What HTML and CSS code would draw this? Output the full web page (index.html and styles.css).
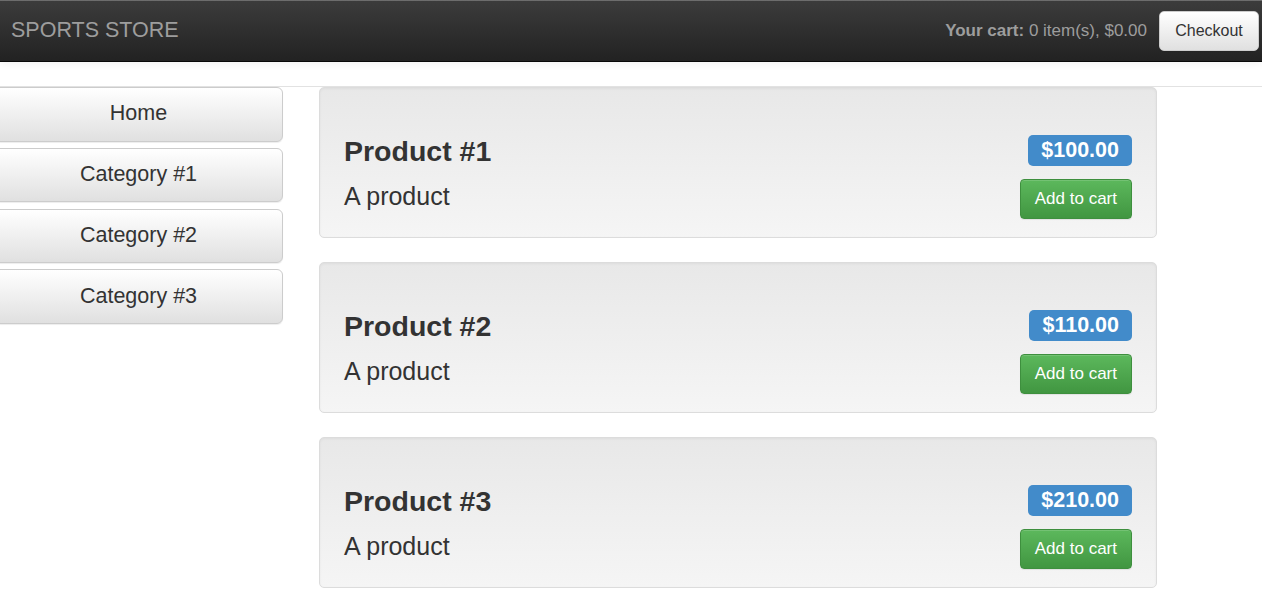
FILE: index.html
```html
<!DOCTYPE html>
<html>
<head>
<meta charset="utf-8">
<title>Sports Store</title>
<link rel="stylesheet" href="styles.css">
</head>
<body>
<header class="navbar">
  <span class="brand">SPORTS STORE</span>
  <div class="cart">
    <span class="cart-summary"><b>Your cart:</b> 0 item(s), $0.00</span>
    <button class="btn btn-default">Checkout</button>
  </div>
</header>
<div class="spacer"></div>
<main class="layout">
  <nav class="sidebar">
    <button class="btn btn-nav">Home</button>
    <button class="btn btn-nav">Category #1</button>
    <button class="btn btn-nav">Category #2</button>
    <button class="btn btn-nav">Category #3</button>
  </nav>
  <section class="products">
    <div class="well">
      <div class="well-top">
        <h3 class="name">Product #1</h3>
        <span class="price">$100.00</span>
      </div>
      <div class="well-bottom">
        <span class="desc">A product</span>
        <button class="btn btn-success">Add to cart</button>
      </div>
    </div>
    <div class="well">
      <div class="well-top">
        <h3 class="name">Product #2</h3>
        <span class="price">$110.00</span>
      </div>
      <div class="well-bottom">
        <span class="desc">A product</span>
        <button class="btn btn-success">Add to cart</button>
      </div>
    </div>
    <div class="well">
      <div class="well-top">
        <h3 class="name">Product #3</h3>
        <span class="price">$210.00</span>
      </div>
      <div class="well-bottom">
        <span class="desc">A product</span>
        <button class="btn btn-success">Add to cart</button>
      </div>
    </div>
  </section>
</main>
</body>
</html>
```

FILE: styles.css
```css
* { box-sizing: border-box; }
html, body { margin: 0; padding: 0; }
body {
  font-family: "Liberation Sans", Arial, sans-serif;
  color: #333;
  background: #fff;
  overflow: hidden;
}

.navbar {
  height: 62px;
  display: flex;
  align-items: center;
  justify-content: space-between;
  background: linear-gradient(to bottom, #3c3c3c 0%, #222 100%);
  border-bottom: 1px solid #080808;
  box-shadow: inset 0 1px 0 rgba(255,255,255,.25), 0 2px 8px rgba(0,0,0,.06);
  padding: 0 3px 0 11px;
}
.brand {
  font-size: 21.5px;
  color: #9d9d9d;
}
.cart {
  display: flex;
  align-items: center;
  gap: 12px;
}
.cart-summary {
  font-size: 17px;
  color: #9d9d9d;
}
.btn {
  font-family: inherit;
  cursor: pointer;
  margin: 0;
}
.btn-default {
  height: 40px;
  width: 100px;
  font-size: 16px;
  color: #333;
  padding: 0;
  border: 1px solid #ccc;
  border-radius: 5px;
  background: linear-gradient(to bottom, #fff 0%, #e0e0e0 100%);
  box-shadow: inset 0 1px 0 rgba(255,255,255,.15), 0 1px 1px rgba(0,0,0,.075);
}

.spacer {
  height: 25px;
  border-bottom: 1px solid #e2e2e2;
}

.layout {
  display: flex;
  align-items: flex-start;
}
.sidebar {
  width: 289px;
  margin-left: -6px;
  display: flex;
  flex-direction: column;
  gap: 6.25px;
}
.btn-nav {
  height: 54.5px;
  width: 100%;
  font-size: 21.5px;
  color: #333;
  padding-top: 0;
  padding-bottom: 1px;
  border: 1px solid #ccc;
  border-radius: 6px;
  background: linear-gradient(to bottom, #fff 0%, #e0e0e0 100%);
  box-shadow: inset 0 1px 0 rgba(255,255,255,.15), 0 1px 1px rgba(0,0,0,.075);
}

.products {
  margin-left: 36px;
  width: 838px;
  display: flex;
  flex-direction: column;
  gap: 24px;
}
.well {
  height: 151px;
  border: 1px solid #dcdcdc;
  border-radius: 5px;
  background: linear-gradient(to bottom, #e8e8e8 0%, #f5f5f5 100%);
  box-shadow: inset 0 1px 3px rgba(0,0,0,.05), 0 1px 0 rgba(255,255,255,.1);
  padding: 47px 24px 18px 24px;
}
.well-top {
  display: flex;
  justify-content: space-between;
  align-items: flex-start;
  height: 31px;
}
.name {
  margin: 1px 0 0 0;
  font-size: 28.5px;
  line-height: 31px;
  font-weight: bold;
  color: #333;
}
.price {
  height: 31px;
  line-height: 29px;
  padding: 1px 13px 1px 13px;
  font-size: 21.5px;
  font-weight: bold;
  color: #fff;
  background: #428bca;
  border-radius: 5px;
}
.well-bottom {
  margin-top: 13px;
  display: flex;
  justify-content: space-between;
  align-items: flex-start;
}
.desc {
  margin-top: 2px;
  font-size: 25px;
  line-height: 30px;
}
.btn-success {
  height: 40px;
  padding: 0 14px;
  font-size: 17px;
  color: #fff;
  border: 1px solid #3e8f3e;
  border-radius: 4px;
  background: linear-gradient(to bottom, #5cb85c 0%, #419641 100%);
  box-shadow: inset 0 1px 0 rgba(255,255,255,.15), 0 1px 1px rgba(0,0,0,.075);
}
```
